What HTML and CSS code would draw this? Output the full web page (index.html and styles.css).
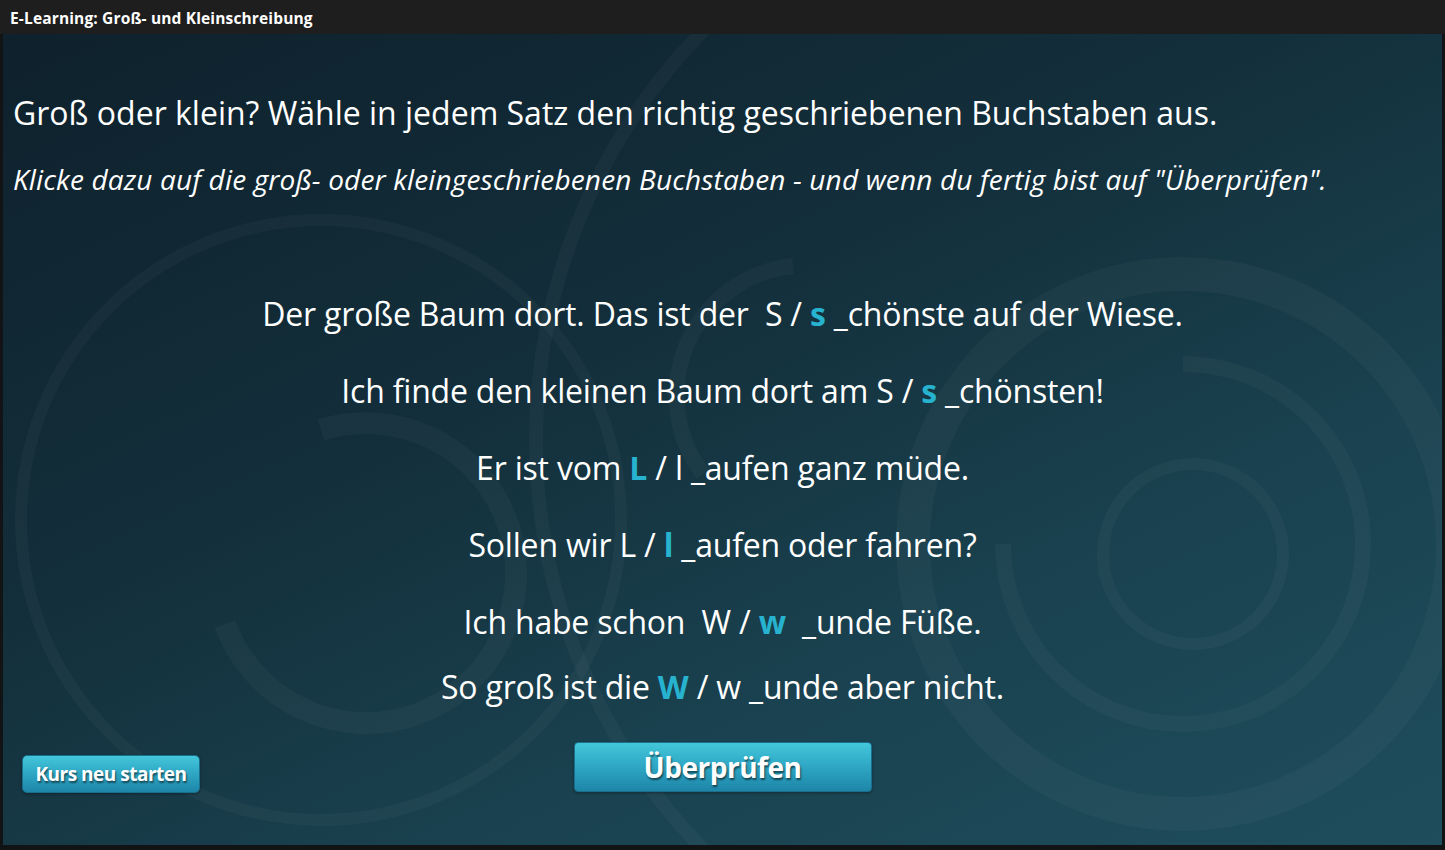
FILE: index.html
```html
<!DOCTYPE html>
<html lang="de">
<head>
<meta charset="utf-8">
<title>E-Learning: Groß- und Kleinschreibung</title>
<link rel="stylesheet" href="styles.css">
</head>
<body>
<div class="titlebar">E-Learning: Groß- und Kleinschreibung</div>
<main class="stage">
  <svg class="deco" width="1440" height="811" viewBox="0 0 1440 811" aria-hidden="true">
    <g fill="none" stroke="#ffffff" stroke-opacity="0.032">
      <circle cx="1118" cy="406" r="585" stroke-width="14"/>
      <circle cx="318" cy="486" r="300" stroke-width="12"/>
      <path d="M318 396 A 150 150 0 1 1 222 590" stroke-width="22"/>
      <path d="M790 232 A 130 130 0 0 0 700 440" stroke-width="16"/>
      <circle cx="1180" cy="510" r="270" stroke-width="34"/>
      <path d="M1180 330 A 180 180 0 1 1 1000 510" stroke-width="16"/>
      <circle cx="1190" cy="520" r="90" stroke-width="12"/>
    </g>
  </svg>
  <header class="intro">
    <h1 class="question">Groß oder klein? Wähle in jedem Satz den richtig geschriebenen Buchstaben aus.</h1>
    <p class="hint">Klicke dazu auf die groß- oder kleingeschriebenen Buchstaben - und wenn du fertig bist auf "Überprüfen".</p>
  </header>
  <section class="sentences">
    <p class="line">Der große Baum dort. Das ist der&nbsp; S / <b class="pick">s</b> _chönste auf der Wiese.</p>
    <p class="line">Ich finde den kleinen Baum dort am S / <b class="pick">s</b> _chönsten!</p>
    <p class="line">Er ist vom <b class="pick">L</b> / l _aufen ganz müde.</p>
    <p class="line">Sollen wir L / <b class="pick">l</b> _aufen oder fahren?</p>
    <p class="line">Ich habe schon&nbsp; W / <b class="pick">w</b>&nbsp; _unde Füße.</p>
    <p class="line last">So groß ist die <b class="pick">W</b> / w _unde aber nicht.</p>
  </section>
  <footer class="actions">
    <button class="btn btn-small">Kurs neu starten</button>
    <button class="btn btn-big">Überprüfen</button>
    <span></span>
  </footer>
</main>
</body>
</html>
```
FILE: styles.css
```css
html, body {
  margin: 0;
  padding: 0;
}
body {
  background: #111314;
  width: 1445px;
  height: 850px;
  overflow: hidden;
  font-family: "Open Sans", "Noto Sans", sans-serif;
  color: #ffffff;
}
.titlebar {
  height: 34px;
  background: #1e1e1e;
  font-weight: 700;
  font-size: 15.5px;
  line-height: 37px;
  padding-left: 10px;
  letter-spacing: 0.15px;
}
.stage {
  position: relative;
  margin: 0 3px;
  height: 811px;
  overflow: hidden;
  background: linear-gradient(155deg, #0e212c 0%, #132f3b 40%, #1a4250 70%, #1f4d5c 100%);
}
.deco {
  position: absolute;
  left: 0;
  top: 0;
  pointer-events: none;
}
.intro {
  position: relative;
  padding: 57px 0 0 10px;
}
.question {
  margin: 0;
  font-weight: 400;
  font-size: 32px;
  line-height: 44px;
  letter-spacing: 0;
}
.hint {
  margin: 25px 0 0;
  font-style: italic;
  font-size: 28px;
  line-height: 38px;
  letter-spacing: 0.15px;
}
.sentences {
  position: relative;
  margin-top: 77px;
  display: flex;
  flex-direction: column;
  align-items: center;
}
.line {
  margin: 0;
  font-size: 32px;
  line-height: 77px;
  letter-spacing: -0.2px;
  white-space: pre-wrap;
}
.line.last {
  margin-top: -12px;
}
.pick {
  color: #27b3cf;
  font-weight: 700;
}
.actions {
  position: relative;
  display: grid;
  grid-template-columns: 1fr auto 1fr;
  align-items: start;
  margin-top: 17px;
  padding: 0 19px;
}
.btn {
  font-family: "Open Sans", "Noto Sans", sans-serif;
  font-weight: 700;
  color: #ffffff;
  border: 1px solid #1a6f8c;
  background: linear-gradient(180deg, #43c6da 0%, #2ea6c4 50%, #1e86a8 100%);
  text-shadow: 1px 2px 2px rgba(0, 0, 0, 0.55);
  box-shadow: 0 1px 3px rgba(0, 0, 0, 0.35);
  cursor: pointer;
  padding: 0;
}
.btn-small {
  justify-self: start;
  margin-top: 13px;
  width: 178px;
  height: 38px;
  border-radius: 5px;
  font-size: 19px;
  letter-spacing: -0.5px;
}
.btn-big {
  width: 298px;
  height: 50px;
  border-radius: 4px;
  font-size: 28px;
  letter-spacing: -0.5px;
}
```
